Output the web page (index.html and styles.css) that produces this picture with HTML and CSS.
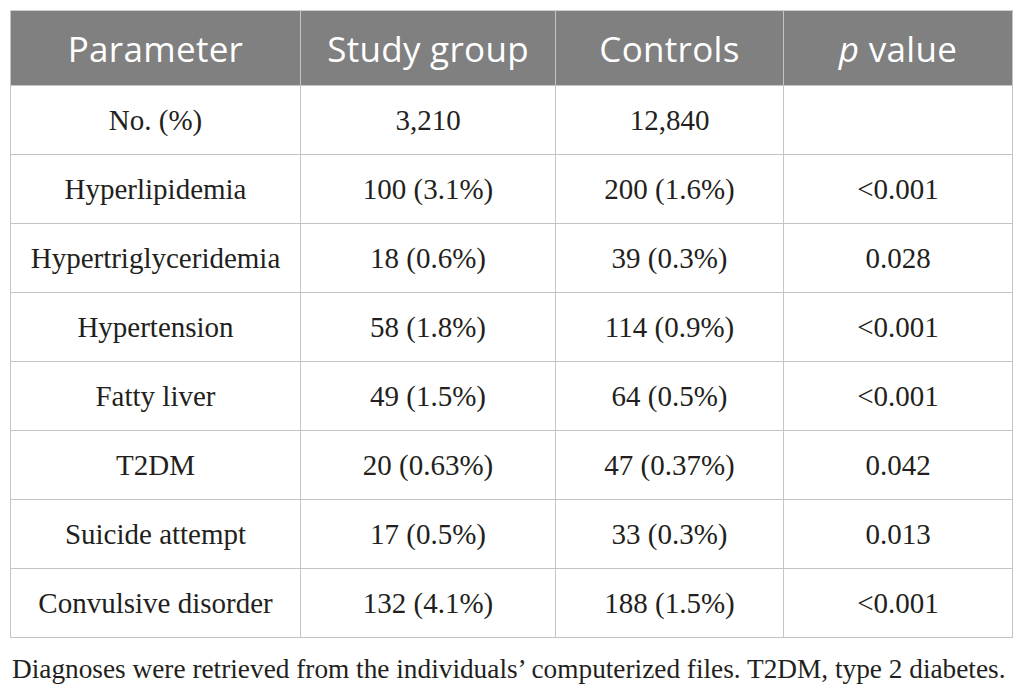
FILE: index.html
```html
<!DOCTYPE html>
<html>
<head>
<meta charset="utf-8">
<link rel="stylesheet" href="styles.css">
</head>
<body>
<div class="page">
<table class="data">
  <colgroup>
    <col class="c1"><col class="c2"><col class="c3"><col class="c4">
  </colgroup>
  <thead>
    <tr><th>Parameter</th><th>Study group</th><th>Controls</th><th><i>p</i> value</th></tr>
  </thead>
  <tbody>
    <tr><td>No. (%)</td><td>3,210</td><td>12,840</td><td></td></tr>
    <tr><td>Hyperlipidemia</td><td>100 (3.1%)</td><td>200 (1.6%)</td><td>&lt;0.001</td></tr>
    <tr><td>Hypertriglyceridemia</td><td>18 (0.6%)</td><td>39 (0.3%)</td><td>0.028</td></tr>
    <tr><td>Hypertension</td><td>58 (1.8%)</td><td>114 (0.9%)</td><td>&lt;0.001</td></tr>
    <tr><td>Fatty liver</td><td>49 (1.5%)</td><td>64 (0.5%)</td><td>&lt;0.001</td></tr>
    <tr><td>T2DM</td><td>20 (0.63%)</td><td>47 (0.37%)</td><td>0.042</td></tr>
    <tr><td>Suicide attempt</td><td>17 (0.5%)</td><td>33 (0.3%)</td><td>0.013</td></tr>
    <tr><td>Convulsive disorder</td><td>132 (4.1%)</td><td>188 (1.5%)</td><td>&lt;0.001</td></tr>
  </tbody>
</table>
<p class="note">Diagnoses were retrieved from the individuals’ computerized files. T2DM, type 2 diabetes.</p>
</div>
</body>
</html>
```

FILE: styles.css
```css
html, body {
  margin: 0;
  padding: 0;
  background: #ffffff;
}
.page {
  padding: 10px 0 0 10px;
  width: 1002px;
}
.data {
  width: 1002px;
  border-collapse: collapse;
  table-layout: fixed;
}
.c1 { width: 290px; }
.c2 { width: 255px; }
.c3 { width: 228px; }
.c4 { width: 229px; }
.data th {
  background: #808080;
  color: #ffffff;
  font-family: "Open Sans", sans-serif;
  font-weight: 400;
  font-size: 35px;
  letter-spacing: 0.3px;
  height: 74px;
  padding: 0;
  text-align: center;
  vertical-align: middle;
  border: 1px solid #c4c4c4;
  border-top-color: #d0d0d0;
}
.data th i {
  font-style: italic;
}
.data td {
  font-family: "Liberation Serif", "Times New Roman", serif;
  font-size: 29px;
  color: #231f20;
  height: 68px;
  padding: 0;
  text-align: center;
  vertical-align: middle;
  border: 1px solid #c4c4c4;
}
.note {
  margin: 16px 0 0 2px;
  font-family: "Liberation Serif", "Times New Roman", serif;
  font-size: 27.3px;
  color: #231f20;
  white-space: nowrap;
}
```
